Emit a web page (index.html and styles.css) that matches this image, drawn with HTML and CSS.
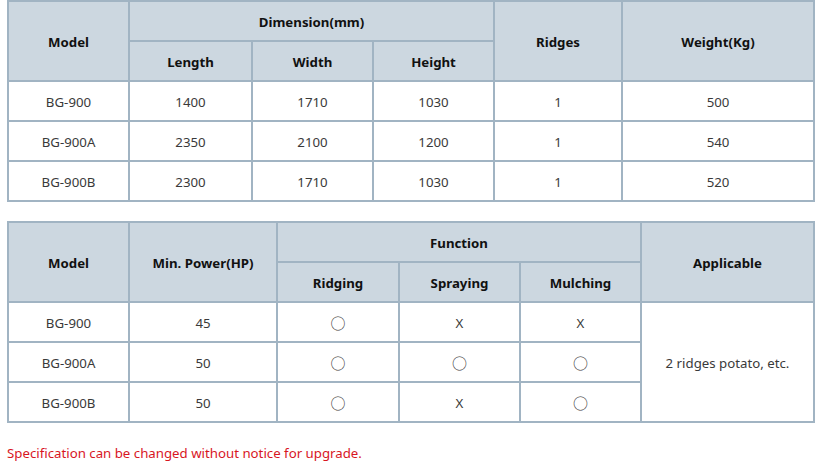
FILE: index.html
```html
<!DOCTYPE html>
<html lang="en">
<head>
<meta charset="utf-8">
<title>Specification</title>
<link rel="stylesheet" href="styles.css">
</head>
<body>
<div class="wrap">
  <table class="spec">
    <colgroup>
      <col class="w121"><col class="w123"><col class="w121"><col class="w121"><col class="w128"><col class="w192">
    </colgroup>
    <thead>
      <tr>
        <th rowspan="2">Model</th>
        <th colspan="3">Dimension(mm)</th>
        <th rowspan="2">Ridges</th>
        <th rowspan="2">Weight(Kg)</th>
      </tr>
      <tr>
        <th>Length</th>
        <th>Width</th>
        <th>Height</th>
      </tr>
    </thead>
    <tbody>
      <tr><td>BG-900</td><td>1400</td><td>1710</td><td>1030</td><td>1</td><td>500</td></tr>
      <tr><td>BG-900A</td><td>2350</td><td>2100</td><td>1200</td><td>1</td><td>540</td></tr>
      <tr><td>BG-900B</td><td>2300</td><td>1710</td><td>1030</td><td>1</td><td>520</td></tr>
    </tbody>
  </table>

  <table class="spec">
    <colgroup>
      <col class="w121"><col class="w148"><col class="w122"><col class="w121"><col class="w121"><col class="w173">
    </colgroup>
    <thead>
      <tr>
        <th rowspan="2">Model</th>
        <th rowspan="2">Min. Power(HP)</th>
        <th colspan="3">Function</th>
        <th rowspan="2">Applicable</th>
      </tr>
      <tr>
        <th>Ridging</th>
        <th>Spraying</th>
        <th>Mulching</th>
      </tr>
    </thead>
    <tbody>
      <tr><td>BG-900</td><td>45</td><td><span class="o">○</span></td><td>X</td><td>X</td><td rowspan="3">2 ridges potato, etc.</td></tr>
      <tr><td>BG-900A</td><td>50</td><td><span class="o">○</span></td><td><span class="o">○</span></td><td><span class="o">○</span></td></tr>
      <tr><td>BG-900B</td><td>50</td><td><span class="o">○</span></td><td>X</td><td><span class="o">○</span></td></tr>
    </tbody>
  </table>

  <p class="note">Specification can be changed without notice for upgrade.</p>
</div>
</body>
</html>
```

FILE: styles.css
```css
html, body {
  margin: 0;
  padding: 0;
  background: #ffffff;
}

body {
  font-family: "Noto Sans", "Noto Sans CJK KR", sans-serif;
  font-size: 13.25px;
  color: #333333;
}

.wrap {
  padding: 0 7px;
}

.spec {
  width: 808px;
  table-layout: fixed;
  border-collapse: separate;
  border-spacing: 0;
  border-top: 2px solid #a1b4c3;
  border-left: 2px solid #a1b4c3;
  margin: 0 0 19px 0;
}

.w121 { width: 121px; }
.w122 { width: 122px; }
.w123 { width: 123px; }
.w128 { width: 128px; }
.w148 { width: 148px; }
.w173 { width: 173px; }
.w192 { width: 192px; }

.spec th,
.spec td {
  box-sizing: border-box;
  height: 40px;
  padding: 1px 0 0 0;
  text-align: center;
  vertical-align: middle;
  border-right: 2px solid #a1b4c3;
  border-bottom: 2px solid #a1b4c3;
  line-height: 18px;
}

.spec th {
  background: #ccd7e0;
  color: #111111;
  font-weight: bold;
}

.spec td {
  background: #ffffff;
  color: #3a3a3a;
}

.o {
  font-family: "Noto Sans CJK KR", sans-serif;
  font-size: 15px;
  position: relative;
  top: 1px;
}

.note {
  margin: 0;
  color: #d8161f;
  line-height: 20px;
  padding-top: 1px;
}
```
